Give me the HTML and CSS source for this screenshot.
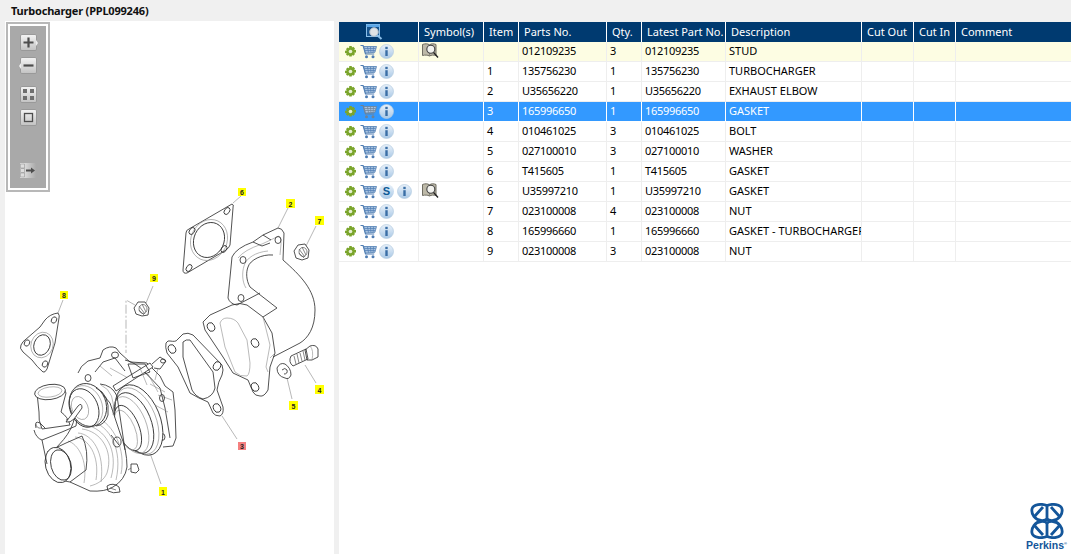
FILE: index.html
```html
<!DOCTYPE html>
<html lang="en">
  <head>
    <meta charset="UTF-8" />
    <title>Turbocharger (PPL099246)</title>
    <link rel="stylesheet" href="styles.css">
  </head>
  <body>
    <!-- shared icons -->
    <svg class="defs" width="0" height="0">
      <symbol id="gear" viewBox="0 0 11 11">
        <path d="M4.300 0h2.400l.3 1.500 1.300-.8 1.700 1.700-.8 1.300 1.800.3v2.400l-1.800.4.800 1.300-1.700 1.700-1.300-.8-.3 1.500H4.300l-.3-1.500-1.300.8L1 8.800l.8-1.300L0 7.100V4.700l1.800-.3-.8-1.300 1.700-1.700 1.300.8z" fill="#7ba52c" />
        <circle cx="5.500" cy="5.500" r="1.800" fill="#e6efcf" />
      </symbol>
      <symbol id="cart" viewBox="0 0 17 15">
        <path d="M.5 1.500h2.600l2.400 8.500h8.700" fill="none" stroke="currentColor" stroke-width="1.200" />
        <path d="M3.800 2.500H16.500l-1.600 5.800-9.400.8z" fill="#a9c3e0" stroke="currentColor" stroke-width=".8" />
        <path d="M4.500 4.500h11M5 6.500h10M7.500 2.800l1 5.800M10.500 2.800l.4 5.500M13.500 2.800l-.4 5.200" stroke="currentColor" stroke-width=".7" fill="none" />
        <circle cx="6.500" cy="12.800" r="1.500" fill="currentColor" />
        <circle cx="13" cy="12.800" r="1.500" fill="currentColor" />
      </symbol>
      <linearGradient id="ball" x1="0" y1="0" x2="0" y2="1">
        <stop offset="0" stop-color="#eaf2fa" />
        <stop offset="1" stop-color="#a9c8e6" />
      </linearGradient>
      <symbol id="info" viewBox="0 0 15 15">
        <circle cx="7.500" cy="7.500" r="7" fill="url(#ball)" stroke="#b4cbe0" stroke-width=".7" />
        <rect x="6.300" y="2.800" width="2.400" height="2.300" fill="#3a6ea5" />
        <rect x="6.300" y="6.200" width="2.400" height="5.800" fill="#3a6ea5" />
      </symbol>
      <symbol id="book" viewBox="0 0 17 15">
        <path d="M.5 1.500c2.500-1 5-1 7 .3 2-1.300 4-1.300 6.500-.3v11c-2.500-.6-4.500-.6-6.500.5-2-1.100-4.500-1.100-7-.5z" fill="#bdb9a8" stroke="#6f6d62" />
        <path d="M7.500 1.800v11" stroke="#6f6d62" stroke-width=".6" />
        <circle cx="8.800" cy="6.300" r="4" fill="#f2f2ee" stroke="#444" stroke-width="1.100" />
        <path d="M11.600 9.500l4.400 5" stroke="#222" stroke-width="1.300" />
      </symbol>
    </svg>

    <header class="title">Turbocharger (PPL099246)</header>

    <main class="layout">
      <!-- Exploded drawing -->
      <section class="drawing">
        <div class="tools">
          <div class="tools-inner">
            <span class="tool t-plus"><svg viewBox="0 0 15 15"><path d="M2.500 7.500h10M7.500 2.500v10" stroke="#4d4d4d" stroke-width="2.200" /></svg></span>
            <span class="tool t-minus"><svg viewBox="0 0 15 15"><path d="M2.500 7.500h10" stroke="#4d4d4d" stroke-width="2.200" /></svg></span>
            <span class="tool t-fit"><svg viewBox="0 0 15 15"><path d="M2 2h4v4H2zM9 2h4v4H9zM2 9h4v4H2zM9 9h4v4H9z" fill="#6f6f6f" /></svg></span>
            <span class="tool t-one"><svg viewBox="0 0 15 15"><rect x="3.500" y="3.500" width="8" height="8" fill="none" stroke="#4d4d4d" stroke-width="1.300" /></svg></span>
            <span class="tool t-list"><svg viewBox="0 0 15 15"><path d="M.5 1h4v4h-4zM.5 5.500h4v4h-4zM.5 10h4v4h-4z" fill="#ddd" stroke="#888" stroke-width=".5" /><path d="M6 7.500h6" stroke="#4d4d4d" stroke-width="2" /><path d="M11 4.500l4 3-4 3z" fill="#4d4d4d" /></svg></span>
          </div>
        </div>

        <svg class="parts" viewBox="5 21 329 533" width="329" height="533">
          <!-- leaders -->
          <g class="leader">
            <path d="M233 203L241 196M278 228L288 208M306 246L316 226M146 303L153 286M58 313L63 300M305 365L316 383M287 378L292 399M222 416L237 439M150 453L161 484" />
            <path class="dash" d="M135 305L126 300V353" />
          </g>

          <!-- gasket 6 -->
          <path d="M232 204Q234 204 233 208L230 245Q229 248 226 250L187 273Q183 274 183 270L186 233Q186 230 189 229z" />
          <ellipse class="thin" cx="209" cy="240" rx="18" ry="21" transform="rotate(25 209 240)" />
          <ellipse cx="209" cy="240" rx="15" ry="18" transform="rotate(25 209 240)" />
          <ellipse cx="227" cy="211" rx="2.500" ry="3.800" transform="rotate(35 227 211)" />
          <ellipse cx="192" cy="231" rx="2.500" ry="3.800" transform="rotate(35 192 231)" />
          <ellipse cx="189" cy="268" rx="2.500" ry="3.800" transform="rotate(35 189 268)" />
          <ellipse cx="224" cy="249" rx="2.500" ry="3.800" transform="rotate(35 224 249)" />

          <!-- elbow 2 -->
          <path d="M278 228Q282 228 284 233L283 260C300 275 315 290 315 310C315 328 308 338 300 343L273 357" />
          <path d="M232 257Q236 248 253 242L263 235L278 228M232 257L228 298Q230 304 237 305L260 293" />
          <path class="thin" d="M238 258Q244 250 262 244L279 236Q282 238 281 244L280 255" />
          <path d="M273 255C262 254 250 260 248 267C246 272 246 280 250 287L277 308L263 317" />
          <path class="thin" d="M268 251C256 252 246 258 244 266C242 272 242 282 246 288" />
          <path d="M253 242L262 246L270 243M263 235L271 240" />
          <ellipse cx="243" cy="260" rx="3" ry="3.500" />
          <ellipse cx="278" cy="240" rx="3" ry="3.500" />
          <ellipse cx="241" cy="298" rx="3" ry="3.500" />

          <!-- flange plate -->
          <path d="M203 322L210 315L232 305Q240 302 247 305L263 317L272 333L275 353L270 367L268 390Q264 397 260 396Q255 396 253 392L248 380L233 373L223 357L205 330Z" />
          <path class="thin" d="M220 323Q222 318 227 318Q234 318 238 323L247 340L250 363Q250 374 247 376Q240 377 235 372L225 347Z" />
          <path class="thin" d="M263 317L270 345L266 367L268 372M275 353L270 358" />
          <ellipse cx="211" cy="327" rx="3.500" ry="4.500" transform="rotate(-25 211 327)" />
          <ellipse cx="255" cy="343" rx="3.500" ry="4.500" transform="rotate(-25 255 343)" />
          <ellipse cx="255" cy="387" rx="3.500" ry="4.500" transform="rotate(-25 255 387)" />

          <!-- gasket 3 -->
          <path d="M166 343Q168 340 170 341Q176 342 177 340L183 334Q188 332 193 335L222 365Q224 370 222 375Q218 382 217 390L223 407Q224 414 220 416Q215 416 213 413L208 402Q198 398 190 393Q184 380 178 367L167 353Q165 347 166 343Z" />
          <path d="M183 342Q186 339 190 340L213 372L215 388Q213 397 203 399Q196 397 192 390L183 357Z" />
          <ellipse cx="172" cy="349" rx="3.500" ry="4.500" transform="rotate(-25 172 349)" />
          <ellipse cx="217" cy="366" rx="3.500" ry="4.500" transform="rotate(25 217 366)" />
          <ellipse cx="217" cy="408" rx="3.500" ry="4.500" transform="rotate(-25 217 408)" />

          <!-- bolt 4, washer 5 -->
          <path d="M291 356L306 349L308 359L293 366Q288 362 291 356Z" />
          <path class="dark" d="M294 356l2 8M297 354l2 9M300 353l2 8M303 351l2 9" />
          <path d="M305 350L310 346Q316 344 318 349L318 357L312 360L307 360Z" />
          <path class="thin" d="M310 346Q314 350 312 360" />
          <path d="M277 368Q280 362 285 364Q291 368 291 375Q289 380 285 378Q277 376 277 368Z" />
          <path d="M282 370Q285 367 287 370Q288 374 284 374" />

          <!-- nuts -->
          <path d="M294 251L298 245L305 244L309 250L308 258L302 260L296 258Z" />
          <ellipse class="dark" cx="303" cy="252" rx="4" ry="4.500" />
          <path class="dark" d="M299 249l6 8M302 247l4 8M299 253l5 5" />
          <path d="M134 308L138 302L145 302L149 308L148 315L142 316L136 314Z" />
          <ellipse class="dark" cx="143" cy="309" rx="4" ry="4.500" />
          <path class="dark" d="M139 306l6 8M142 304l4 8M139 310l5 5" />

          <!-- gasket 8 -->
          <path d="M58 313Q60 316 59 318L55 343L47 369Q45 373 43 372Q37 367 32 360L23 352Q19 348 21 345Q23 341 25 340L40 327L45 320Q50 314 58 313Z" />
          <ellipse cx="54" cy="320" rx="2.500" ry="3.300" transform="rotate(30 54 320)" />
          <ellipse cx="27" cy="343" rx="2.500" ry="3.300" transform="rotate(30 27 343)" />
          <ellipse cx="45" cy="364" rx="2.500" ry="3.300" transform="rotate(30 45 364)" />
          <ellipse class="thin" cx="42" cy="345" rx="11" ry="13" transform="rotate(20 42 345)" />
          <ellipse cx="42" cy="345" rx="8" ry="10.500" transform="rotate(20 42 345)" />

          <!-- turbine housing flange -->
          <path d="M78 373Q80 366 88 361L100 358L103 350Q110 345 116 348L120 353L130 362L147 363L160 376L165 386L173 392L175 410L176 438L173 446L163 447" />
          <path d="M95 372L103 362L115 358L125 371M125 360Q135 362 145 372L160 388L165 408L170 438" />
          <path class="thin" d="M110 368L128 378M148 374L158 392M150 384L165 392M155 405L168 412M100 366L112 376M140 368L152 380M158 395L172 400" />
          <ellipse cx="115" cy="355" rx="3.500" ry="3" />
          <ellipse cx="88" cy="378" rx="3" ry="3.500" />
          <ellipse cx="162" cy="398" rx="2.500" ry="3.500" />
          <ellipse cx="162" cy="437" rx="3" ry="3.500" />

          <!-- centre housing -->
          <ellipse class="fill" cx="139" cy="420" rx="21" ry="37" transform="rotate(-22 139 420)" />
          <ellipse class="thin" cx="137" cy="421" rx="19" ry="35" transform="rotate(-22 137 421)" />
          <ellipse cx="134" cy="423" rx="17" ry="32" transform="rotate(-22 134 423)" />
          <ellipse class="thin" cx="131" cy="425" rx="15" ry="30" transform="rotate(-22 131 425)" />
          <ellipse class="fill" cx="128" cy="428" rx="11" ry="24" transform="rotate(-22 128 428)" />
          <ellipse class="thin" cx="126" cy="430" rx="9" ry="21" transform="rotate(-22 126 430)" />

          <!-- compressor housing -->
          <path class="fill" d="M75 415C72 436 56 446 50 455C47 465 54 480 70 482L90 491Q105 492 113 487Q125 480 127 467Q127 450 120 433L110 403L100 391Q90 400 75 415Z" />
          <path class="thin" d="M82 429C100 431 114 450 107 473C104 480 98 484 90 486M85 425C105 428 119 450 111 478M90 421C110 425 123 450 116 480M96 417C114 424 126 450 121 474M75 437C88 438 100 455 96 480M78 433C92 434 105 452 101 482M68 441C78 444 88 460 84 483" />
          <path d="M47 452L66 443L82 436Q89 450 86 470L70 482" />
          <ellipse class="white" cx="58" cy="465" rx="12.500" ry="18" transform="rotate(-15 58 465)" />
          <ellipse cx="61" cy="465" rx="10" ry="15.500" transform="rotate(-15 61 465)" />
          <path d="M117 437a4 5 0 1 0 .1 0M111 435l8 10" />

          <!-- compressor outlet elbow -->
          <path class="white" d="M37 393Q42 385 54 385Q64 386 66 393L61 412Q68 417 70 425L42 429Q38 420 39 412Z" />
          <ellipse class="white" cx="50" cy="392" rx="15.500" ry="7.500" transform="rotate(-8 50 392)" />
          <ellipse class="thin" cx="50" cy="392" rx="12" ry="5" transform="rotate(-8 50 392)" />
          <path d="M36 428Q34 420 40 423L45 428M34 430Q36 438 42 440L62 432L76 426L77 418L66 420M42 440L47 464" />
          <path class="dark" d="M36 424a4 4 0 0 0 5 4" />

          <!-- actuator -->
          <ellipse class="fill" cx="88" cy="405" rx="18" ry="22" transform="rotate(-22 88 405)" />
          <ellipse class="thin" cx="86" cy="406" rx="16" ry="21" transform="rotate(-22 86 406)" />
          <ellipse cx="84" cy="408" rx="14" ry="20" transform="rotate(-22 84 408)" />
          <ellipse class="thin" cx="80" cy="408" rx="8" ry="12" transform="rotate(-22 80 408)" />
          <path class="white" d="M66 422L78 406Q82 402 82 408L74 419Q70 423 66 422Z" />
          <path d="M96 388Q110 394 108 415Q105 425 96 426" />
          <path class="thin" d="M101 385Q116 392 113 415" />
          <path d="M100 384Q112 385 117 396L125 450" />

          <!-- rod and fitting -->
          <path class="white" d="M113 386L150 363L153 367L116 391Z" />
          <path d="M152 364L160 357L166 361L160 369L154 368M128 364L145 364L150 372L133 378Z" />
          <ellipse cx="163" cy="361" rx="2.500" ry="2" />
          <path class="thin" d="M140 368L147 385M158 368L155 380" />

          <!-- small bolts at the bottom -->
          <path d="M131 464L137 464L139 470L136 473L131 472Z" />
          <path d="M107 486Q113 482 119 487L120 492Q113 494 108 491Z" />
          <path class="dark" d="M128 470L131 468M110 488l6 2" />

          <!-- balloons -->
          <g class="balloons">
            <rect x="238" y="188" width="8" height="8" /><text x="242" y="195">6</text>
            <rect x="286" y="199" width="9" height="9" /><text x="290.500" y="206.500">2</text>
            <rect x="315" y="216" width="9" height="9" /><text x="319.500" y="223.500">7</text>
            <rect x="150" y="274" width="8" height="8" /><text x="154" y="281">9</text>
            <rect x="60" y="291" width="8" height="8" /><text x="64" y="298">8</text>
            <rect x="315" y="385" width="9" height="9" /><text x="319.500" y="392.500">4</text>
            <rect x="289" y="401" width="9" height="9" /><text x="293.500" y="408.500">5</text>
            <rect class="hit" x="238" y="442" width="8" height="8" /><text x="242" y="449">3</text>
            <rect x="159" y="487" width="8" height="9" /><text x="163" y="494.500">1</text>
          </g>
        </svg>
      </section>

      <!-- Parts list -->
      <section class="list">
        <table class="parts-table">
          <colgroup>
            <col class="c-act"><col class="c-sym"><col class="c-item"><col class="c-part"><col class="c-qty"><col class="c-last"><col class="c-desc"><col class="c-cut1"><col class="c-cut2"><col>
          </colgroup>
          <thead>
            <tr>
              <th class="th-search">
                <svg viewBox="0 0 17 16" width="17" height="16">
                  <rect x=".5" y=".5" width="13" height="12" fill="#16548f" stroke="#8cc0ea" />
                  <rect x=".5" y=".5" width="13" height="2.500" fill="#5aa5e6" />
                  <circle cx="8" cy="8" r="4.300" fill="#dfe3e6" stroke="#a9b8c6" />
                  <path d="M11 11l4.500 4" stroke="#8cc0ea" stroke-width="2" />
                </svg>
              </th>
              <th>Symbol(s)</th><th>Item</th><th>Parts No.</th><th>Qty.</th><th>Latest Part No.</th><th>Description</th><th>Cut Out</th><th>Cut In</th><th>Comment</th>
            </tr>
          </thead>
          <tbody>
            <tr class="note">
              <td><div class="acts"><svg class="i-gear"><use href="#gear" /></svg><svg class="i-cart"><use href="#cart" /></svg><svg class="i-info"><use href="#info" /></svg></div></td>
              <td><svg class="i-book"><use href="#book" /></svg></td><td></td><td>012109235</td><td>3</td><td>012109235</td><td>STUD</td><td></td><td></td><td></td>
            </tr>
            <tr>
              <td><div class="acts"><svg class="i-gear"><use href="#gear" /></svg><svg class="i-cart"><use href="#cart" /></svg><svg class="i-info"><use href="#info" /></svg></div></td>
              <td></td><td>1</td><td>135756230</td><td>1</td><td>135756230</td><td>TURBOCHARGER</td><td></td><td></td><td></td>
            </tr>
            <tr>
              <td><div class="acts"><svg class="i-gear"><use href="#gear" /></svg><svg class="i-cart"><use href="#cart" /></svg><svg class="i-info"><use href="#info" /></svg></div></td>
              <td></td><td>2</td><td>U35656220</td><td>1</td><td>U35656220</td><td>EXHAUST ELBOW</td><td></td><td></td><td></td>
            </tr>
            <tr class="selected">
              <td><div class="acts"><svg class="i-gear"><use href="#gear" /></svg><svg class="i-cart"><use href="#cart" /></svg><svg class="i-info"><use href="#info" /></svg></div></td>
              <td></td><td>3</td><td>165996650</td><td>1</td><td>165996650</td><td>GASKET</td><td></td><td></td><td></td>
            </tr>
            <tr>
              <td><div class="acts"><svg class="i-gear"><use href="#gear" /></svg><svg class="i-cart"><use href="#cart" /></svg><svg class="i-info"><use href="#info" /></svg></div></td>
              <td></td><td>4</td><td>010461025</td><td>3</td><td>010461025</td><td>BOLT</td><td></td><td></td><td></td>
            </tr>
            <tr>
              <td><div class="acts"><svg class="i-gear"><use href="#gear" /></svg><svg class="i-cart"><use href="#cart" /></svg><svg class="i-info"><use href="#info" /></svg></div></td>
              <td></td><td>5</td><td>027100010</td><td>3</td><td>027100010</td><td>WASHER</td><td></td><td></td><td></td>
            </tr>
            <tr>
              <td><div class="acts"><svg class="i-gear"><use href="#gear" /></svg><svg class="i-cart"><use href="#cart" /></svg><svg class="i-info"><use href="#info" /></svg></div></td>
              <td></td><td>6</td><td>T415605</td><td>1</td><td>T415605</td><td>GASKET</td><td></td><td></td><td></td>
            </tr>
            <tr>
              <td><div class="acts"><svg class="i-gear"><use href="#gear" /></svg><svg class="i-cart"><use href="#cart" /></svg><span class="badge-s">S</span><svg class="i-info"><use href="#info" /></svg></div></td>
              <td><svg class="i-book"><use href="#book" /></svg></td><td>6</td><td>U35997210</td><td>1</td><td>U35997210</td><td>GASKET</td><td></td><td></td><td></td>
            </tr>
            <tr>
              <td><div class="acts"><svg class="i-gear"><use href="#gear" /></svg><svg class="i-cart"><use href="#cart" /></svg><svg class="i-info"><use href="#info" /></svg></div></td>
              <td></td><td>7</td><td>023100008</td><td>4</td><td>023100008</td><td>NUT</td><td></td><td></td><td></td>
            </tr>
            <tr>
              <td><div class="acts"><svg class="i-gear"><use href="#gear" /></svg><svg class="i-cart"><use href="#cart" /></svg><svg class="i-info"><use href="#info" /></svg></div></td>
              <td></td><td>8</td><td>165996660</td><td>1</td><td>165996660</td><td>GASKET - TURBOCHARGER</td><td></td><td></td><td></td>
            </tr>
            <tr>
              <td><div class="acts"><svg class="i-gear"><use href="#gear" /></svg><svg class="i-cart"><use href="#cart" /></svg><svg class="i-info"><use href="#info" /></svg></div></td>
              <td></td><td>9</td><td>023100008</td><td>3</td><td>023100008</td><td>NUT</td><td></td><td></td><td></td>
            </tr>
          </tbody>
        </table>

        <!-- Perkins logo -->
        <div class="logo">
          <svg viewBox="0 0 34 36" width="34" height="36">
            <g fill="none" stroke="#14569a" stroke-width="2.800">
              <path d="M17 2.500C12 .5 3 1 2 6c-1 5 3 11 9 11.500 3 .2 5-.5 6-1.500M17 2.500C22 .5 31 1 32 6c1 5-3 11-9 11.500-3 .2-5-.5-6-1.500" />
              <path d="M17 33.500C12 35.500 3 35 2 30c-1-5 3-11 9-11.500 3-.2 5 .5 6 1.500M17 33.500C22 35.500 31 35 32 30c1-5-3-11-9-11.500-3-.2-5 .5-6 1.500" />
              <path d="M17 2.500V16M17 20v13.500" />
              <path d="M4 14L13 4M21 4l9 10M4 22l9 10M21 32l9-10" />
            </g>
          </svg>
          <span class="logo-name">Perkins<sup>®</sup></span>
        </div>
      </section>
    </main>
  </body>
</html>
```

FILE: styles.css
```css
* {
  margin: 0;
  padding: 0;
  box-sizing: border-box;
}
html,
body {
  height: 100%;
  overflow: hidden;
}
body {
  background: #f0f0f0;
  font-family: "Noto Sans", "Open Sans", sans-serif;
  font-size: 11px;
  color: #000;
  display: flex;
  flex-direction: column;
}
.defs {
  position: absolute;
}

/* title bar */
.title {
  height: 21px;
  line-height: 21px;
  padding-left: 11px;
  font-size: 11px;
  font-weight: 700;
  letter-spacing: -0.2px;
  color: #111;
}

.layout {
  flex: 1;
  display: flex;
  min-height: 0;
}

/* drawing panel */
.drawing {
  position: relative;
  width: 329px;
  margin-left: 5px;
  background: #fff;
}
.parts {
  display: block;
}
.parts path,
.parts ellipse {
  fill: none;
  stroke: #333;
  stroke-width: 0.85;
}
.parts .thin {
  stroke: #8c8c8c;
  stroke-width: 0.6;
}
.parts .dark {
  stroke: #555;
  stroke-width: 0.7;
}
.parts .fill,
.parts .white {
  fill: #fff;
}
.leader path {
  stroke: #888;
  stroke-width: 0.6;
}
.leader .dash {
  stroke-dasharray: 9 2 2 2;
}
.balloons rect {
  fill: #ffff00;
}
.balloons .hit {
  fill: #f58080;
}
.balloons text {
  font-family: "Liberation Sans", sans-serif;
  font-size: 7px;
  font-weight: 700;
  text-anchor: middle;
  fill: #222;
}

/* zoom toolbar */
.tools {
  position: absolute;
  left: 1px;
  top: 1px;
  width: 44px;
  height: 170px;
  padding: 2px;
  background: #fff;
  border: 2px solid #b8b8b8;
}
.tools-inner {
  position: relative;
  height: 100%;
  background: #a9a9a9;
}
.tool {
  position: absolute;
  left: 11px;
  width: 15px;
  height: 15px;
  background: linear-gradient(180deg, #f2f2f2, #c4c4c4);
  border-radius: 1px;
  box-shadow: 0 0 0 0.5px #8a8a8a;
}
.tool svg {
  display: block;
  width: 15px;
  height: 15px;
}
.t-plus { top: 9px; }
.t-minus { top: 32px; }
.t-fit { top: 61px; }
.t-one { top: 84px; }
.t-list {
  top: 137px;
  left: 10px;
  width: 16px;
  background: linear-gradient(90deg, #eee, #a9a9a9);
  box-shadow: none;
}
/* little arrows on the zoom buttons */
.t-plus::after,
.t-minus::after {
  content: "";
  position: absolute;
  top: 5px;
  border: 3px solid transparent;
}
.t-plus::after {
  left: 15px;
  border-left: 2px solid #eee;
  border-right: 0;
}
.t-minus::after {
  left: -2px;
  border-right: 2px solid #eee;
  border-left: 0;
}

/* parts list */
.list {
  position: relative;
  flex: 1;
  margin: 1px 0 0 5px;
  background: #fff;
}
.parts-table {
  width: 732px;
  table-layout: fixed;
  border-collapse: separate;
  border-spacing: 0;
}
.c-act { width: 80px; }
.c-sym { width: 65px; }
.c-item { width: 35px; }
.c-part { width: 88px; }
.c-qty { width: 35px; }
.c-last { width: 84px; }
.c-desc { width: 136px; }
.c-cut1 { width: 52px; }
.c-cut2 { width: 42px; }

.parts-table th {
  height: 20px;
  padding: 0 0 2px 5px;
  background: #003a70;
  color: #fff;
  font-weight: 400;
  font-size: 11px;
  text-align: left;
  white-space: nowrap;
  border-right: 1px solid #fff;
}
.parts-table th:last-child {
  border-right: 0;
}
.parts-table .th-search {
  padding: 0 8px 0 0;
  text-align: center;
}
.th-search svg {
  display: block;
  margin: 0 auto;
}
.parts-table td {
  height: 20px;
  padding: 0 0 2px 3px;
  white-space: nowrap;
  overflow: hidden;
  border-right: 1px solid #eeeeee;
  border-bottom: 1px solid #eeeeee;
}
.parts-table td:nth-child(4),
.parts-table td:nth-child(6) {
  letter-spacing: -0.3px;
}
.parts-table td:last-child {
  border-right: 0;
}
.parts-table td:first-child {
  padding: 0 0 0 6px;
}
.note td {
  background: #fdfde3;
}
.selected td {
  background: #3399ff;
  color: #fff;
  border-right-color: #fff;
  border-bottom-color: #fff;
}

/* row icons */
.acts {
  display: flex;
  align-items: center;
  height: 19px;
}
.i-gear {
  width: 11px;
  height: 11px;
  margin-right: 4px;
}
.i-cart {
  width: 17px;
  height: 15px;
  margin-right: 2px;
  color: #4f7db3;
}
.selected .i-cart {
  color: #6f8296;
}
.i-info {
  width: 15px;
  height: 15px;
}
.badge-s {
  width: 15px;
  height: 15px;
  margin-right: 3px;
  border-radius: 50%;
  background: linear-gradient(180deg, #eaf2fa, #a9c8e6);
  color: #0c5a96;
  font-family: "Liberation Sans", sans-serif;
  font-size: 11px;
  font-weight: 700;
  line-height: 15px;
  text-align: center;
}
.i-book {
  display: block;
  width: 17px;
  height: 15px;
}

/* logo */
.logo {
  position: absolute;
  right: 4px;
  bottom: 2px;
  display: flex;
  flex-direction: column;
  align-items: center;
  color: #14569a;
  font-family: "Liberation Sans", sans-serif;
}
.logo-name {
  font-size: 10.500px;
  font-weight: 700;
  line-height: 13px;
}
.logo-name sup {
  font-size: 4px;
  vertical-align: 4px;
  line-height: 0;
}
```
